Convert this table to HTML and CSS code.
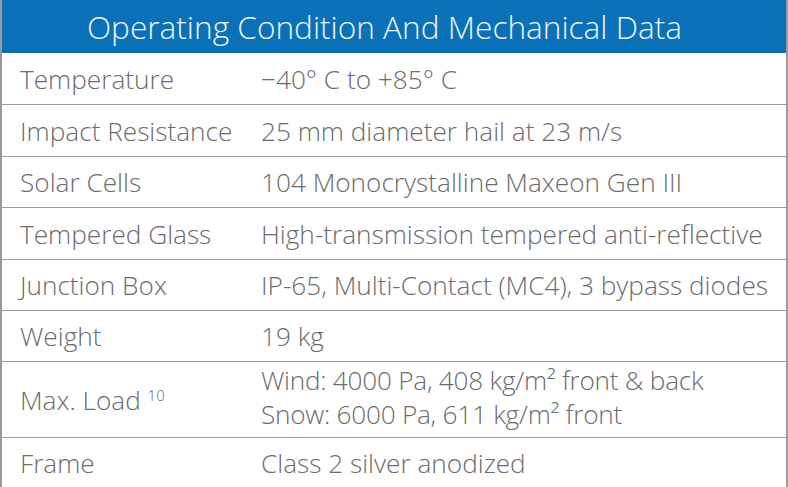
FILE: index.html
```html
<!DOCTYPE html>
<html>
<head>
<meta charset="utf-8">
<link rel="stylesheet" href="styles.css">
</head>
<body>
<div class="sheet">
  <div class="title">Operating Condition And Mechanical Data</div>
  <div class="row first"><div class="label">Temperature</div><div class="value">−40° C to +85° C</div></div>
  <div class="row r52"><div class="label">Impact Resistance</div><div class="value">25 mm diameter hail at 23 m/s</div></div>
  <div class="row"><div class="label">Solar Cells</div><div class="value">104 Monocrystalline Maxeon Gen III</div></div>
  <div class="row r52"><div class="label">Tempered Glass</div><div class="value">High-transmission tempered anti-reflective</div></div>
  <div class="row"><div class="label">Junction Box</div><div class="value">IP-65, Multi-Contact (MC4), 3 bypass diodes</div></div>
  <div class="row"><div class="label">Weight</div><div class="value">19 kg</div></div>
  <div class="row tall"><div class="label">Max. Load <sup class="note">10</sup></div><div class="value load">Wind: 4000 Pa, 408 kg/m² front &amp; back<br>Snow: 6000 Pa, 611 kg/m² front</div></div>
  <div class="row last"><div class="label">Frame</div><div class="value">Class 2 silver anodized</div></div>
</div>
</body>
</html>
```
FILE: styles.css
```css
html, body {
  margin: 0;
  padding: 0;
  background: #ffffff;
}
body {
  font-family: "Open Sans", "Liberation Sans", sans-serif;
  font-weight: 300;
  color: #6c6c6c;
}
.sheet {
  width: 788px;
  height: 487px;
  overflow: hidden;
  box-sizing: border-box;
  border-left: 2px solid #9a9a9a;
  border-right: 2px solid #9a9a9a;
}
.title {
  height: 53px;
  background: #0a71b9;
  color: #eef5fb;
  font-size: 31.6px;
  line-height: 53px;
  text-align: center;
  margin: 0 -2px;
  padding-right: 19px;
  white-space: nowrap;
}
.row {
  display: flex;
  align-items: center;
  box-sizing: border-box;
  height: 51px;
  border-top: 1px solid #9e9e9e;
  font-size: 26.2px;
  white-space: nowrap;
}
.row.first { border-top: none; }
.row.r52 { height: 52px; }
.row.tall {
  height: 76px;
  line-height: 34px;
}
.row.last {
  height: 60px;
  align-items: flex-start;
  padding-top: 7px;
}
.label {
  width: 241px;
  padding-left: 18px;
  flex-shrink: 0;
}
.value {
  flex: 1;
}
.value.load {
  letter-spacing: -0.25px;
  margin-bottom: 5px;
}
.note {
  font-size: 15px;
  vertical-align: 9px;
  line-height: 0;
}
```
